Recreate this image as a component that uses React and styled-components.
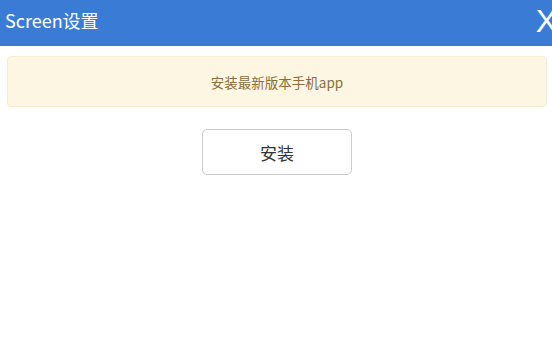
import React from "react";
import styled, { createGlobalStyle } from "styled-components";

const Global = createGlobalStyle`
  html, body { margin: 0; padding: 0; background: #fff; }
  body { font-family: "Microsoft YaHei", "Noto Sans CJK SC", "Liberation Sans", sans-serif; overflow: hidden; }
`;

const Header = styled.div`
  height: 46px;
  background: #3a7bd5;
  display: flex;
  align-items: center;
  justify-content: space-between;
  padding-left: 5px;
  overflow: hidden;
  color: #fff;
`;

const Title = styled.div`
  font-size: 18px;
  line-height: 22px;
  margin-top: -6px;
`;

const Close = styled.div`
  font-family: "Liberation Sans", "Noto Sans", sans-serif;
  font-size: 32px;
  line-height: 32px;
  margin-top: -5px;
  margin-right: -5px;
`;

const Body = styled.div`
  padding: 10px 5px 0 7px;
  display: flex;
  flex-direction: column;
  align-items: center;
`;

const Alert = styled.div`
  box-sizing: border-box;
  align-self: stretch;
  height: 51px;
  background: #fdf6e3;
  border: 1px solid #f8ecd0;
  border-radius: 4px;
  color: #8a6d3b;
  font-size: 13.5px;
  display: flex;
  align-items: center;
  justify-content: center;
`;

const InstallButton = styled.button`
  box-sizing: border-box;
  margin-top: 22px;
  width: 150px;
  height: 46px;
  background: #fff;
  border: 1px solid #ccc;
  border-radius: 5px;
  color: #333;
  font-family: inherit;
  font-size: 17px;
  cursor: pointer;
`;

export default function App() {
  return (
    <>
      <Global />
      <Header>
        <Title>Screen设置</Title>
        <Close>X</Close>
      </Header>
      <Body>
        <Alert>安装最新版本手机app</Alert>
        <InstallButton>安装</InstallButton>
      </Body>
    </>
  );
}
